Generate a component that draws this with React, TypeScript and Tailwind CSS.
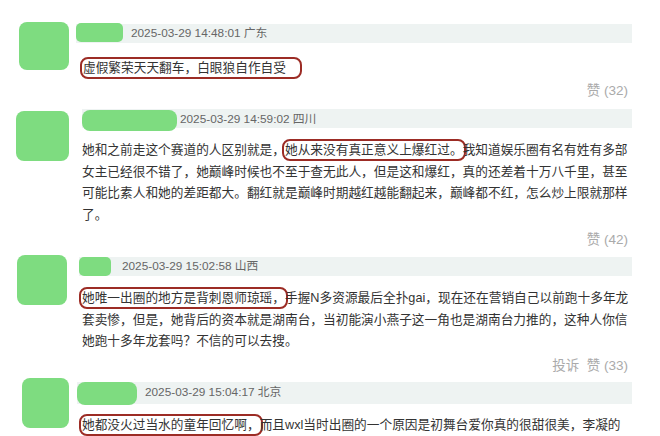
import React from "react";

const font = { fontFamily: '"Liberation Sans", "Noto Sans CJK SC", sans-serif' };

function Box({ children, wide }: { children: React.ReactNode; wide?: boolean }) {
  return (
    <span
      className={
        wide
          ? "border-2 border-[#9c2c25] rounded-[8px] pl-[1px] pr-[14px] py-[2px] -ml-[3px] mr-[0px]"
          : "border-2 border-[#9c2c25] rounded-[8px] px-[1px] py-[2px] -mx-[3px]"
      }
    >
      {children}
    </span>
  );
}

export default function App() {
  return (
    <div className="w-[660px] h-[436px] overflow-hidden bg-white text-[#333]" style={font}>
      {/* Comment 1 */}
      <div className="flex pt-[22px] h-[99px]">
        <div className="ml-[19px] w-[50px] h-[48px] rounded-[8px] bg-[#7edc80] shrink-0" />
        <div className="ml-[7px] w-[556px]">
          <div className="mt-[2px] h-[19px] bg-[#eef3f2] flex items-center">
            <div className="w-[47px] h-[19px] -mt-[2px] rounded-[5px] bg-[#7edc80]" />
            <span className="ml-[8px] text-[11.8px] text-[#666]">2025-03-29 14:48:01 广东</span>
          </div>
          <p className="mt-[15px] pl-[7px] text-[12.7px] leading-[21.7px] whitespace-nowrap">
            <Box wide>虚假繁荣天天翻车，白眼狼自作自受</Box>
          </p>
          <div className="mt-[3px] pr-[4px] text-right text-[13.5px] leading-[16px] text-[#aaa]">赞 (32)</div>
        </div>
      </div>

      {/* Comment 2 */}
      <div className="flex h-[149px]">
        <div className="mt-[12px] ml-[16px] w-[53px] h-[50px] rounded-[8px] bg-[#7edc80] shrink-0" />
        <div className="mt-[10px] ml-[13px] w-[550px]">
          <div className="h-[19px] bg-[#eef3f2] flex items-start">
            <div className="mt-[1px] w-[95px] h-[21px] rounded-[8px] bg-[#7edc80]" />
            <span className="ml-[3px] mt-[2px] text-[11.8px] text-[#666]">2025-03-29 14:59:02 四川</span>
          </div>
          <p className="mt-[12px] text-[12.7px] leading-[21.7px] whitespace-nowrap">
            她和之前走这个赛道的人区别就是，<Box>她从来没有真正意义上爆红过。</Box>我知道娱乐圈有名有姓有多部
            <br />
            女主已经很不错了，她巅峰时候也不至于查无此人，但是这和爆红，真的还差着十万八千里，甚至
            <br />
            可能比素人和她的差距都大。翻红就是巅峰时期越红越能翻起来，巅峰都不红，怎么炒上限就那样
            <br />
            了。
          </p>
          <div className="mt-[5px] pr-[4px] text-right text-[13.5px] leading-[16px] text-[#aaa]">赞 (42)</div>
        </div>
      </div>

      {/* Comment 3 */}
      <div className="flex h-[126px]">
        <div className="mt-[7px] ml-[17px] w-[50px] h-[50px] rounded-[8px] bg-[#7edc80] shrink-0" />
        <div className="mt-[9px] ml-[12px] w-[553px]">
          <div className="h-[19px] bg-[#eef3f2] flex items-center">
            <div className="w-[32px] h-[19px] rounded-[5px] bg-[#7edc80]" />
            <span className="ml-[11px] text-[11.8px] text-[#666]">2025-03-29 15:02:58 山西</span>
          </div>
          <p className="mt-[12px] pl-[3px] text-[12.7px] leading-[21.7px] whitespace-nowrap">
            <Box>她唯一出圈的地方是背刺恩师琼瑶，</Box>手握N多资源最后全扑gai，现在还在营销自己以前跑十多年龙
            <br />
            套卖惨，但是，她背后的资本就是湖南台，当初能演小燕子这一角也是湖南台力推的，这种人你信
            <br />
            她跑十多年龙套吗？不信的可以去搜。
          </p>
          <div className="mt-[5px] pr-[4px] text-right text-[13.5px] leading-[16px] text-[#aaa]">投诉&nbsp;&nbsp;赞 (33)</div>
        </div>
      </div>

      {/* Comment 4 */}
      <div className="flex">
        <div className="mt-[4px] ml-[22px] w-[47px] h-[50px] rounded-[8px] bg-[#7edc80] shrink-0" />
        <div className="mt-[8px] ml-[8px] w-[555px]">
          <div className="h-[22px] bg-[#eef3f2] flex items-center">
            <div className="w-[60px] h-[23px] rounded-[8px] bg-[#7edc80]" />
            <span className="ml-[8px] text-[11.8px] text-[#666]">2025-03-29 15:04:17 北京</span>
          </div>
          <p className="mt-[11px] pl-[5px] text-[12.7px] leading-[21.7px] whitespace-nowrap">
            <Box>她都没火过当水的童年回忆啊，</Box>而且wxl当时出圈的一个原因是初舞台爱你真的很甜很美，李凝的
          </p>
        </div>
      </div>
    </div>
  );
}
